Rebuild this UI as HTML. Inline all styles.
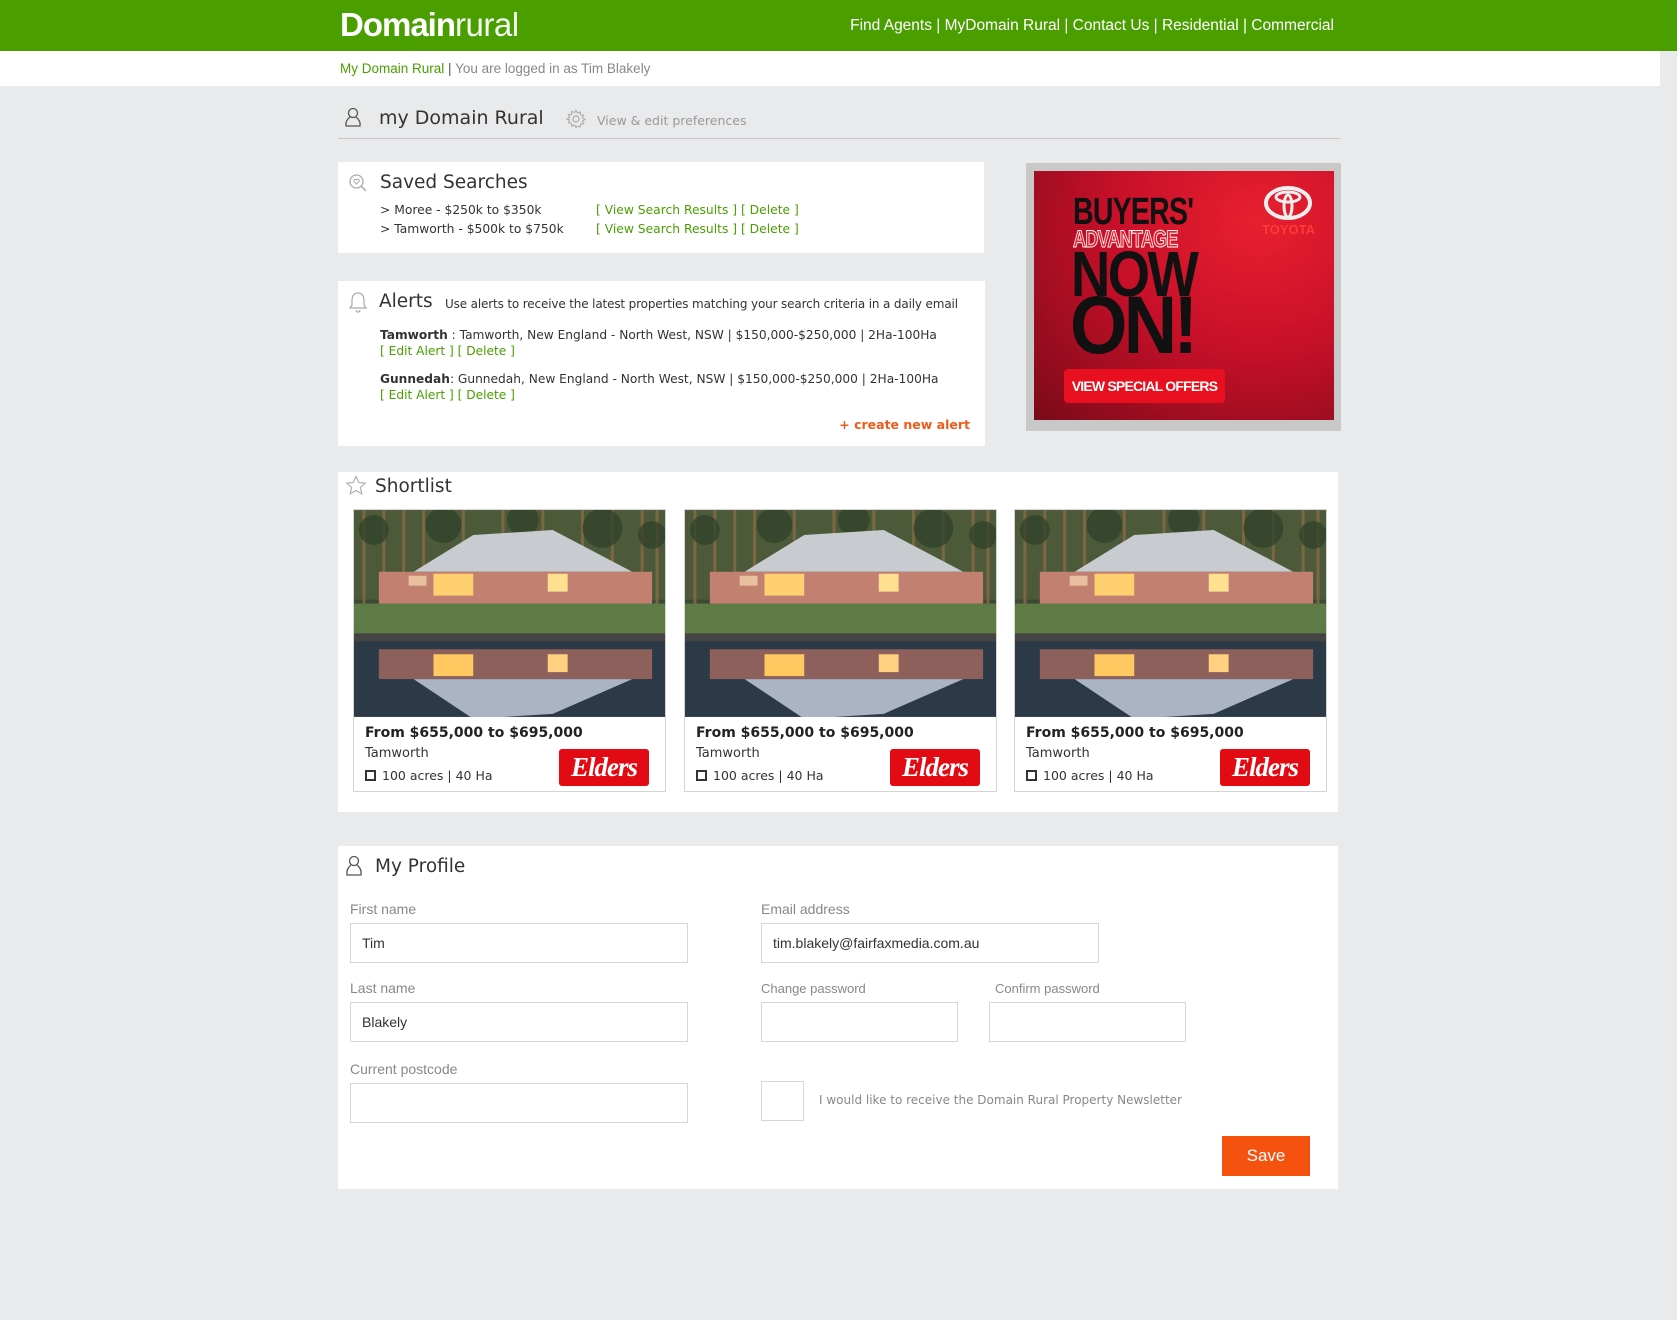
<!DOCTYPE html>
<html><head><meta charset="utf-8"><style>
*{margin:0;padding:0;box-sizing:border-box}
body{width:1677px;height:1320px;background:#e9eaeb;font-family:"DejaVu Sans",Verdana,sans-serif;position:relative;overflow:hidden;color:#333}
.a{position:absolute;white-space:nowrap}
.hdr{position:absolute;left:0;top:0;width:1677px;height:51px;background:#4a9e00}
.g{color:#4a9e00}
.box{position:absolute;background:#fff}
.card{position:absolute;top:509px;width:313px;height:283px;border:1px solid #d4d4d4;background:#fff}
.card svg{display:block}
.lbl{font-family:"Liberation Sans",Arial,sans-serif;color:#888;font-size:14px}
.inp{position:absolute;border:1px solid #d6d6d6;background:#fff;font-family:"Liberation Sans",Arial,sans-serif;font-size:14px;color:#333;padding-left:11px;display:flex;align-items:center}
.elders{position:absolute;left:205px;top:239px;width:90px;height:37px;background:#e30b13;border-radius:3px;color:#fff;font-family:"Liberation Serif",serif;font-style:italic;font-weight:bold;font-size:27px;text-align:center;line-height:37px;letter-spacing:-1px}
</style></head><body>
<div class="hdr"></div>
<div class="a" style="left:340px;top:6px;color:#fff;font-family:'Liberation Sans',sans-serif;font-size:33px;letter-spacing:-1px"><span style="font-weight:bold">Domain</span><span style="font-weight:normal;letter-spacing:-0.5px;opacity:.95">rural</span></div>
<div class="a" style="right:343px;top:17px;color:#fff;font-family:'Liberation Sans',sans-serif;font-size:15.5px">Find Agents | MyDomain Rural | Contact Us | Residential | Commercial</div>
<div class="a" style="left:0;top:51px;width:1660px;height:35px;background:#fff"></div>
<div class="a" style="left:340px;top:61px;color:#888;font-family:'Liberation Sans',sans-serif;font-size:13.5px"><span class="g">My Domain Rural</span> <span style="color:#555">|</span> You are logged in as Tim Blakely</div>

<svg class="a" style="left:344px;top:107px" width="18" height="21" viewBox="0 0 18 21"><circle cx="9" cy="6" r="4.5" fill="none" stroke="#555" stroke-width="1.3"/><path d="M6 10 Q1 14 2 19 H16 Q17 14 12 10" fill="none" stroke="#555" stroke-width="1.3"/></svg>
<div class="a" style="left:379px;top:107px;font-size:19px;color:#333">my Domain Rural</div>
<svg class="a" style="left:566px;top:109px" width="20" height="20" viewBox="0 0 20 20"><circle cx="10" cy="10" r="3" fill="none" stroke="#aaa" stroke-width="1.2"/><path d="M10 1.5 l1.5 2.5 2.8-1 .3 2.9 2.9.3-1 2.8 2.5 1.5-2.5 1.5 1 2.8-2.9.3-.3 2.9-2.8-1L10 18.5 8.5 16l-2.8 1-.3-2.9-2.9-.3 1-2.8L1 10l2.5-1.5-1-2.8 2.9-.3.3-2.9 2.8 1z" fill="none" stroke="#aaa" stroke-width="1.1"/></svg>
<div class="a" style="left:597px;top:113px;font-size:12.5px;color:#999">View &amp; edit preferences</div>
<div class="a" style="left:338px;top:138px;width:1002px;height:1px;background:#c8c8c8"></div>

<div class="box" style="left:338px;top:162px;width:646px;height:91px"></div>
<svg class="a" style="left:348px;top:173px" width="20" height="20" viewBox="0 0 20 20"><circle cx="8.5" cy="8.5" r="6.5" fill="none" stroke="#aaa" stroke-width="1.3"/><path d="M13 13 L18 18" stroke="#aaa" stroke-width="1.5"/><path d="M8.5 11 l-2.5-2.5 a1.4 1.4 0 0 1 2.5-1.5 a1.4 1.4 0 0 1 2.5 1.5z" fill="none" stroke="#aaa"/></svg>
<div class="a" style="left:380px;top:172px;font-size:18.5px;color:#333">Saved Searches</div>
<div class="a" style="left:380px;top:201px;font-size:12.3px;line-height:19px;color:#333">&gt; Moree - $250k to $350k<br>&gt; Tamworth - $500k to $750k</div>
<div class="a g" style="left:596px;top:201px;font-size:12.3px;line-height:19px">[ View Search Results ] [ Delete ]<br>[ View Search Results ] [ Delete ]</div>

<div class="box" style="left:338px;top:281px;width:647px;height:165px"></div>
<svg class="a" style="left:348px;top:291px" width="20" height="22" viewBox="0 0 20 22"><path d="M10 2 C5 2 4 6 4 10 V14 L2 17 H18 L16 14 V10 C16 6 15 2 10 2z M8 19 a2 2 0 0 0 4 0" fill="none" stroke="#aaa" stroke-width="1.2"/></svg>
<div class="a" style="left:379px;top:291px;font-size:18.5px;color:#333">Alerts</div>
<div class="a" style="left:445px;top:297px;font-size:12px;letter-spacing:-0.15px;color:#333">Use alerts to receive the latest properties matching your search criteria in a daily email</div>
<div class="a" style="left:380px;top:327px;font-size:12.2px;line-height:16px;color:#333"><b>Tamworth</b> : Tamworth, New England - North West, NSW | $150,000-$250,000 | 2Ha-100Ha<br><span class="g">[ Edit Alert ] [ Delete ]</span></div>
<div class="a" style="left:380px;top:371px;font-size:12.2px;line-height:16px;color:#333"><b>Gunnedah</b>: Gunnedah, New England - North West, NSW | $150,000-$250,000 | 2Ha-100Ha<br><span class="g">[ Edit Alert ] [ Delete ]</span></div>
<div class="a" style="right:707px;top:417px;font-size:12.5px;color:#f05a1a;font-weight:bold">+ create new alert</div>

<div class="a" style="left:1026px;top:163px;width:315px;height:268px;background:#c8c8c8"></div>
<div class="a" style="left:1034px;top:171px;width:300px;height:249px;background:radial-gradient(ellipse at 75% 20%,#e8202e 0%,#c8102a 45%,#7a0a18 100%);overflow:hidden">
<div class="a" style="left:39px;top:20px;font-family:'Liberation Sans',sans-serif;font-weight:bold;font-size:38px;color:#111;letter-spacing:-1px;transform:scaleX(.75);transform-origin:left">BUYERS'</div>
<div class="a" style="left:39px;top:55px;font-family:'Liberation Sans',sans-serif;font-weight:bold;font-size:24px;color:#e8202e;-webkit-text-stroke:1px #fff;letter-spacing:-1px;transform:scaleX(.75);transform-origin:left">ADVANTAGE</div>
<div class="a" style="left:37px;top:66px;font-family:'Liberation Sans',sans-serif;font-weight:bold;font-size:64px;color:#111;letter-spacing:-3px;transform:scaleX(.85);transform-origin:left">NOW</div>
<div class="a" style="left:36px;top:108px;font-family:'Liberation Sans',sans-serif;font-weight:bold;font-size:82px;color:#111;letter-spacing:-4px;transform:scaleX(.9);transform-origin:left">ON!</div>
<svg class="a" style="left:229px;top:13px" width="50" height="38" viewBox="0 0 50 38"><ellipse cx="25" cy="19" rx="22" ry="15" fill="none" stroke="#eee" stroke-width="4"/><ellipse cx="25" cy="13" rx="12" ry="5" fill="none" stroke="#eee" stroke-width="3"/><ellipse cx="25" cy="22" rx="4" ry="11" fill="none" stroke="#eee" stroke-width="3"/></svg>
<div class="a" style="left:228px;top:51px;font-family:'Liberation Sans',sans-serif;font-weight:bold;font-size:13px;color:#ff3a3a">TOYOTA</div>
<div class="a" style="left:30px;top:198px;width:161px;height:34px;background:#e8101f;border-radius:4px;color:#fff;font-family:'Liberation Sans',sans-serif;font-weight:bold;font-size:14px;line-height:34px;text-align:center;letter-spacing:-.8px">VIEW SPECIAL OFFERS</div>
</div>

<div class="box" style="left:338px;top:472px;width:1000px;height:340px"></div>
<svg class="a" style="left:345px;top:475px" width="22" height="21" viewBox="0 0 22 21"><path d="M11 1.5 l2.8 6 6.4.6-4.8 4.3 1.4 6.4L11 15.5 5.2 18.8l1.4-6.4L1.8 8.1l6.4-.6z" fill="none" stroke="#aaa" stroke-width="1.1"/></svg>
<div class="a" style="left:375px;top:476px;font-size:18.5px;color:#333">Shortlist</div>

<svg width="0" height="0" style="position:absolute"><defs>
<symbol id="house" viewBox="0 0 313 208">
<rect width="313" height="208" fill="#3c4a35"/>
<rect width="313" height="90" fill="#4c5a3a"/>
<g stroke="#8a6a45" stroke-width="3" opacity=".8"><path d="M10 0V95M30 0V95M50 0V90M70 0V90M110 0V85M150 0V80M190 0V80M230 0V85M260 0V90M290 0V95M305 0V95"/></g>
<g fill="#2d3f28" opacity=".7"><circle cx="20" cy="20" r="15"/><circle cx="90" cy="15" r="18"/><circle cx="170" cy="10" r="16"/><circle cx="250" cy="18" r="20"/><circle cx="300" cy="25" r="14"/></g>
<polygon points="120,25 60,62 280,62 200,20" fill="#c8ccd0"/>
<rect x="25" y="62" width="275" height="32" fill="#c28070"/>
<rect x="80" y="64" width="40" height="22" fill="#ffd070"/><rect x="195" y="64" width="20" height="18" fill="#ffe090"/><rect x="55" y="66" width="18" height="10" fill="#e8c0a0"/>
<rect x="0" y="94" width="313" height="36" fill="#5e7a45"/>
<rect x="0" y="124" width="313" height="8" fill="#444"/>
<rect x="0" y="132" width="313" height="76" fill="#2c3a48"/>
<rect x="25" y="140" width="275" height="30" fill="#a86a60" opacity=".8"/>
<rect x="80" y="145" width="40" height="22" fill="#ffc860"/><rect x="195" y="145" width="20" height="18" fill="#ffd080"/>
<polygon points="60,170 280,170 200,205 120,210" fill="#aab4c4"/>
</symbol></defs></svg>

<div class="card" style="left:353px"><svg width="311" height="207"><use href="#house"/></svg>
<div class="a" style="left:11px;top:215px;font-size:14px;font-weight:bold;color:#222">From $655,000 to $695,000</div>
<div class="a" style="left:11px;top:236px;font-size:13px;color:#333">Tamworth</div>
<div class="a" style="left:11px;top:258px;font-size:12.5px;color:#333"><span style="display:inline-block;width:11px;height:11px;border:2px solid #333;vertical-align:-1px;margin-right:6px"></span>100 acres | 40 Ha</div>
<div class="elders">Elders</div></div>
<div class="card" style="left:684px"><svg width="311" height="207"><use href="#house"/></svg>
<div class="a" style="left:11px;top:215px;font-size:14px;font-weight:bold;color:#222">From $655,000 to $695,000</div>
<div class="a" style="left:11px;top:236px;font-size:13px;color:#333">Tamworth</div>
<div class="a" style="left:11px;top:258px;font-size:12.5px;color:#333"><span style="display:inline-block;width:11px;height:11px;border:2px solid #333;vertical-align:-1px;margin-right:6px"></span>100 acres | 40 Ha</div>
<div class="elders">Elders</div></div>
<div class="card" style="left:1014px"><svg width="311" height="207"><use href="#house"/></svg>
<div class="a" style="left:11px;top:215px;font-size:14px;font-weight:bold;color:#222">From $655,000 to $695,000</div>
<div class="a" style="left:11px;top:236px;font-size:13px;color:#333">Tamworth</div>
<div class="a" style="left:11px;top:258px;font-size:12.5px;color:#333"><span style="display:inline-block;width:11px;height:11px;border:2px solid #333;vertical-align:-1px;margin-right:6px"></span>100 acres | 40 Ha</div>
<div class="elders">Elders</div></div>

<div class="box" style="left:338px;top:846px;width:1000px;height:343px"></div>
<svg class="a" style="left:345px;top:855px" width="18" height="22" viewBox="0 0 18 22"><circle cx="9" cy="6" r="4.5" fill="none" stroke="#555" stroke-width="1.3"/><path d="M6 10 Q1 14 2 20 H16 Q17 14 12 10" fill="none" stroke="#555" stroke-width="1.3"/></svg>
<div class="a" style="left:375px;top:856px;font-size:18.5px;color:#333">My Profile</div>

<div class="a lbl" style="left:350px;top:901px">First name</div>
<div class="inp" style="left:350px;top:923px;width:338px;height:40px">Tim</div>
<div class="a lbl" style="left:350px;top:980px">Last name</div>
<div class="inp" style="left:350px;top:1002px;width:338px;height:40px">Blakely</div>
<div class="a lbl" style="left:350px;top:1061px">Current postcode</div>
<div class="inp" style="left:350px;top:1083px;width:338px;height:40px"></div>
<div class="a lbl" style="left:761px;top:901px">Email address</div>
<div class="inp" style="left:761px;top:923px;width:338px;height:40px">tim.blakely@fairfaxmedia.com.au</div>
<div class="a lbl" style="left:761px;top:981px;font-size:13px">Change password</div>
<div class="inp" style="left:761px;top:1002px;width:197px;height:40px"></div>
<div class="a lbl" style="left:995px;top:981px;font-size:13px">Confirm password</div>
<div class="inp" style="left:989px;top:1002px;width:197px;height:40px"></div>
<div class="inp" style="left:761px;top:1081px;width:43px;height:40px"></div>
<div class="a" style="left:819px;top:1093px;font-size:12px;color:#888">I would like to receive the Domain Rural Property Newsletter</div>
<div class="a" style="left:1222px;top:1136px;width:88px;height:40px;background:#f5520f;color:#fff;font-family:'Liberation Sans',sans-serif;font-size:17px;line-height:40px;text-align:center">Save</div>
</body></html>
